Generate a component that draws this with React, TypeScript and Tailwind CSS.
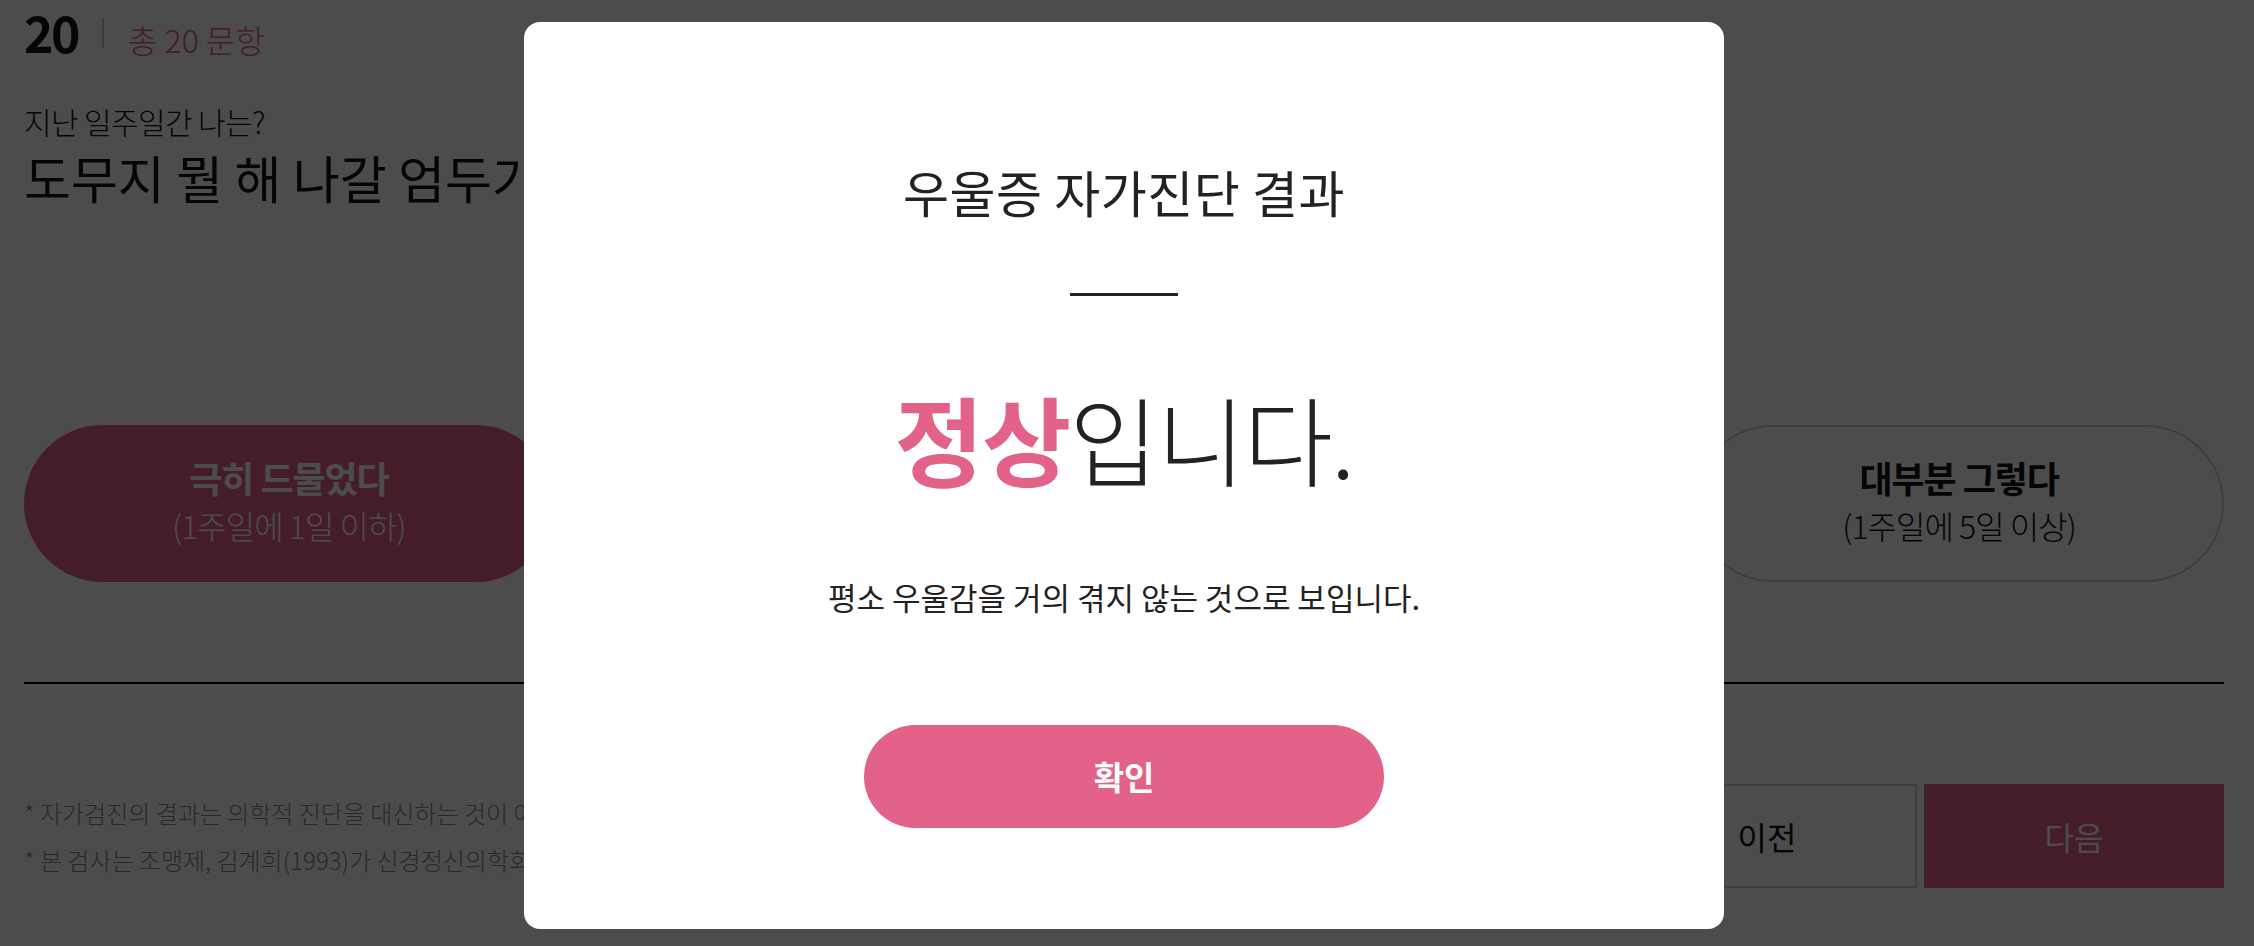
import React from "react";

const FONT = { fontFamily: '"Noto Sans CJK KR", "Noto Sans", sans-serif' };

const options = [
  { title: "극히 드물었다", sub: "(1주일에 1일 이하)", selected: true },
  { title: "가끔 있었다", sub: "(1주일에 1~2일)", selected: false },
  { title: "종종 있었다", sub: "(1주일에 3~4일)", selected: false },
  { title: "대부분 그렇다", sub: "(1주일에 5일 이상)", selected: false },
];

function ResultModal() {
  return (
    <div className="fixed inset-0 bg-black/70">
      <div className="absolute left-[524px] top-[22px] flex h-[907px] w-[1200px] flex-col items-center rounded-[16px] bg-white pt-[139px]">
        <h3 className="text-[50px] leading-[60px] tracking-[0.01em] text-[#222]">우울증 자가진단 결과</h3>
        <div className="mt-[72px] h-[3px] w-[108px] bg-[#222]" />
        <p className="mt-[83px] text-[97px] font-light leading-[115px] tracking-[-0.02em] text-[#222]">
          <span className="font-bold text-[#e36388]">정상</span>입니다.
        </p>
        <p className="mt-[80px] text-[31px] leading-[45px] text-[#222]">
          평소 우울감을 거의 겪지 않는 것으로 보입니다.
        </p>
        <button
          type="button"
          className="mt-[106px] h-[103px] w-[520px] rounded-full bg-[#e36388] text-[33px] font-bold text-white"
        >
          확인
        </button>
      </div>
    </div>
  );
}

export default function App() {
  return (
    <div className="relative min-h-screen bg-white pl-[24px] pr-[30px] pt-[2px]" style={FONT}>
      <div className="flex items-baseline gap-[24px]">
        <span className="text-[50px] font-bold leading-[58px] tracking-[-0.05em] text-[#111]">20</span>
        <span className="h-[30px] w-[2px] self-center bg-[#c4c4c4]" />
        <span className="text-[32px] font-light text-[#e36388]">총 20 문항</span>
      </div>

      <p className="mt-[38px] text-[30px] font-light leading-[40px] tracking-[-0.02em] text-[#111]">지난 일주일간 나는?</p>
      <h2 className="mt-[6px] text-[51px] leading-[60px] text-[#111]">도무지 뭘 해 나갈 엄두가 나지 않았다.</h2>

      <div className="mt-[218px] grid grid-cols-4 gap-[27px]">
        {options.map((o) => (
          <button
            key={o.title}
            type="button"
            className={
              o.selected
                ? "flex h-[157px] flex-col items-center rounded-full bg-[#e36388] pt-[27px] text-white"
                : "flex h-[157px] flex-col items-center rounded-full border-2 border-[#ccc] bg-white pt-[25px] text-[#111]"
            }
          >
            <span className="text-[36px] font-bold leading-[50px] tracking-[-0.03em]">{o.title}</span>
            <span className="text-[32px] font-light leading-[46px] tracking-[-0.03em]">{o.sub}</span>
          </button>
        ))}
      </div>

      <div className="mt-[100px] h-[2px] bg-black" />

      <div className="mt-[100px] flex items-center justify-between">
        <div className="text-[24px] font-light leading-[47px] text-[#888]">
          <p>* 자가검진의 결과는 의학적 진단을 대신하는 것이 아니므로, 정확한 진단을 위해서는 전문가와 상담하시기 바랍니다.</p>
          <p>* 본 검사는 조맹제, 김계희(1993)가 신경정신의학회지에 발표한 한국판 CES-D 척도를 바탕으로 하였습니다.</p>
        </div>
        <div className="flex gap-[7px]">
          <button type="button" className="h-[104px] w-[300px] border-2 border-[#ccc] bg-white text-[32px] text-[#111]">
            이전
          </button>
          <button type="button" className="h-[104px] w-[300px] bg-[#e36388] text-[32px] text-white">
            다음
          </button>
        </div>
      </div>

      <ResultModal />
    </div>
  );
}
